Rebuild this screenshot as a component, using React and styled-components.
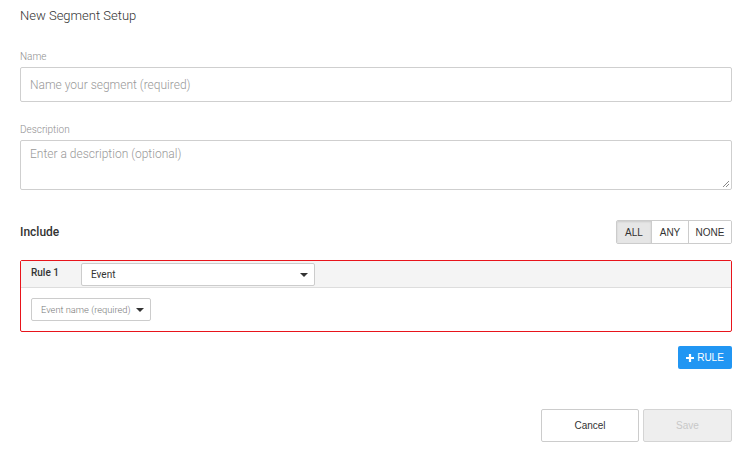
import React from "react";
import styled, { createGlobalStyle } from "styled-components";

const Global = createGlobalStyle`
  html, body { margin: 0; padding: 0; background: #fff; }
  body { font-family: Roboto, "Liberation Sans", sans-serif; }
  * { box-sizing: border-box; }
`;

const Page = styled.div`
  width: 752px;
  padding: 8px 20px 0 20px;
  display: flex;
  flex-direction: column;
`;

const Title = styled.div`
  font-size: 13px;
  line-height: 16px;
  color: #333;
  font-weight: 300;
`;

const Label = styled.div`
  font-size: 10px;
  line-height: 13px;
  color: #8f8f8f;
  font-weight: 300;
  margin-top: ${(p) => p.$mt}px;
`;

const TextInput = styled.div`
  margin-top: 4px;
  height: 35px;
  border: 1px solid #cfcfcf;
  border-radius: 2px;
  padding: 0 9px;
  display: flex;
  align-items: center;
  font-size: 12px;
  font-weight: 300;
  color: #999;
`;

const TextArea = styled.div`
  position: relative;
  margin-top: 4px;
  height: 50px;
  border: 1px solid #cfcfcf;
  border-radius: 2px;
  padding: 6px 9px;
  font-size: 12px;
  font-weight: 300;
  line-height: 15px;
  color: #999;
`;

const Grip = styled.svg`
  position: absolute;
  right: 1px;
  bottom: 1px;
`;

const IncludeRow = styled.div`
  margin-top: 30px;
  height: 24px;
  display: flex;
  align-items: center;
  justify-content: space-between;
`;

const IncludeLabel = styled.div`
  font-size: 12px;
  font-weight: 500;
  color: #333;
`;

const Group = styled.div`
  display: flex;
  border: 1px solid #ccc;
  border-radius: 2px;
  overflow: hidden;
  height: 24px;
`;

const GroupBtn = styled.div`
  width: ${(p) => p.$w}px;
  display: flex;
  align-items: center;
  justify-content: center;
  font-family: "Liberation Sans", Arial, sans-serif;
  font-size: 10px;
  color: #333;
  background: ${(p) => (p.$active ? "#e6e6e6" : "#fff")};
  box-shadow: ${(p) => (p.$active ? "inset 0 1px 2px rgba(0,0,0,0.12)" : "none")};
  border-left: ${(p) => (p.$first ? "none" : "1px solid #ccc")};
`;

const RuleBox = styled.div`
  margin-top: 16px;
  height: 72px;
  border: 1px solid #e8141b;
  border-radius: 2px;
  display: flex;
  flex-direction: column;
`;

const RuleHeader = styled.div`
  height: 27px;
  background: #f4f4f4;
  border-bottom: 1px solid #ddd;
  display: flex;
  align-items: center;
  padding-left: 10px;
`;

const RuleTitle = styled.div`
  width: 50px;
  font-size: 10px;
  font-weight: 500;
  color: #333;
  margin-top: -3px;
`;

const Select = styled.div`
  width: ${(p) => p.$w}px;
  height: ${(p) => p.$h}px;
  border: 1px solid #ccc;
  border-radius: 2px;
  background: #fff;
  display: flex;
  align-items: center;
  justify-content: space-between;
  white-space: nowrap;
  padding: 0 6px 0 ${(p) => p.$pl}px;
  font-size: ${(p) => p.$fs}px;
  font-weight: ${(p) => p.$weight};
  color: ${(p) => p.$color};
`;

const Caret = styled.span`
  flex: none;
  width: 0;
  height: 0;
  border-left: 4px solid transparent;
  border-right: 4px solid transparent;
  border-top: 4px solid #333;
  margin-top: 1px;
`;

const RuleBody = styled.div`
  padding: 10px 10px 0 10px;
`;

const AddRow = styled.div`
  margin-top: 14px;
  display: flex;
  justify-content: flex-end;
`;

const AddButton = styled.div`
  width: 54px;
  height: 23px;
  background: #2196f3;
  border-radius: 2px;
  display: flex;
  align-items: center;
  justify-content: center;
  gap: 3px;
  color: #fff;
  font-family: "Liberation Sans", Arial, sans-serif;
  font-size: 10px;
`;

const Footer = styled.div`
  margin-top: 40px;
  display: flex;
  justify-content: flex-end;
  gap: 4px;
`;

const FooterBtn = styled.div`
  width: ${(p) => p.$w}px;
  height: 33px;
  border: 1px solid ${(p) => (p.$disabled ? "#d4d4d4" : "#ccc")};
  border-radius: 2px;
  background: ${(p) => (p.$disabled ? "#eeeeee" : "#fff")};
  color: ${(p) => (p.$disabled ? "#c8c8c8" : "#333")};
  display: flex;
  align-items: center;
  justify-content: center;
  font-family: "Liberation Sans", Arial, sans-serif;
  font-size: 10px;
`;

export default function App() {
  return (
    <>
      <Global />
      <Page>
        <Title>New Segment Setup</Title>
        <Label $mt={26}>Name</Label>
        <TextInput>Name your segment (required)</TextInput>
        <Label $mt={21}>Description</Label>
        <TextArea>
          Enter a description (optional)
          <Grip width="8" height="8" viewBox="0 0 8 8">
            <path d="M7 1 L1 7 M7 4 L4 7" stroke="#888" strokeWidth="1" />
          </Grip>
        </TextArea>
        <IncludeRow>
          <IncludeLabel>Include</IncludeLabel>
          <Group>
            <GroupBtn $w={34} $first $active>ALL</GroupBtn>
            <GroupBtn $w={37}>ANY</GroupBtn>
            <GroupBtn $w={43}>NONE</GroupBtn>
          </Group>
        </IncludeRow>
        <RuleBox>
          <RuleHeader>
            <RuleTitle>Rule 1</RuleTitle>
            <Select $w={234} $h={23} $pl={9} $fs={10} $weight={400} $color="#333">
              Event
              <Caret />
            </Select>
          </RuleHeader>
          <RuleBody>
            <Select $w={120} $h={23} $pl={9} $fs={9.3} $weight={300} $color="#777">
              Event name (required)
              <Caret />
            </Select>
          </RuleBody>
        </RuleBox>
        <AddRow>
          <AddButton>
            <svg width="8" height="8" viewBox="0 0 8 8">
              <path d="M4 0 V8 M0 4 H8" stroke="#fff" strokeWidth="2.2" />
            </svg>
            RULE
          </AddButton>
        </AddRow>
        <Footer>
          <FooterBtn $w={98}>Cancel</FooterBtn>
          <FooterBtn $w={89} $disabled>Save</FooterBtn>
        </Footer>
      </Page>
    </>
  );
}
